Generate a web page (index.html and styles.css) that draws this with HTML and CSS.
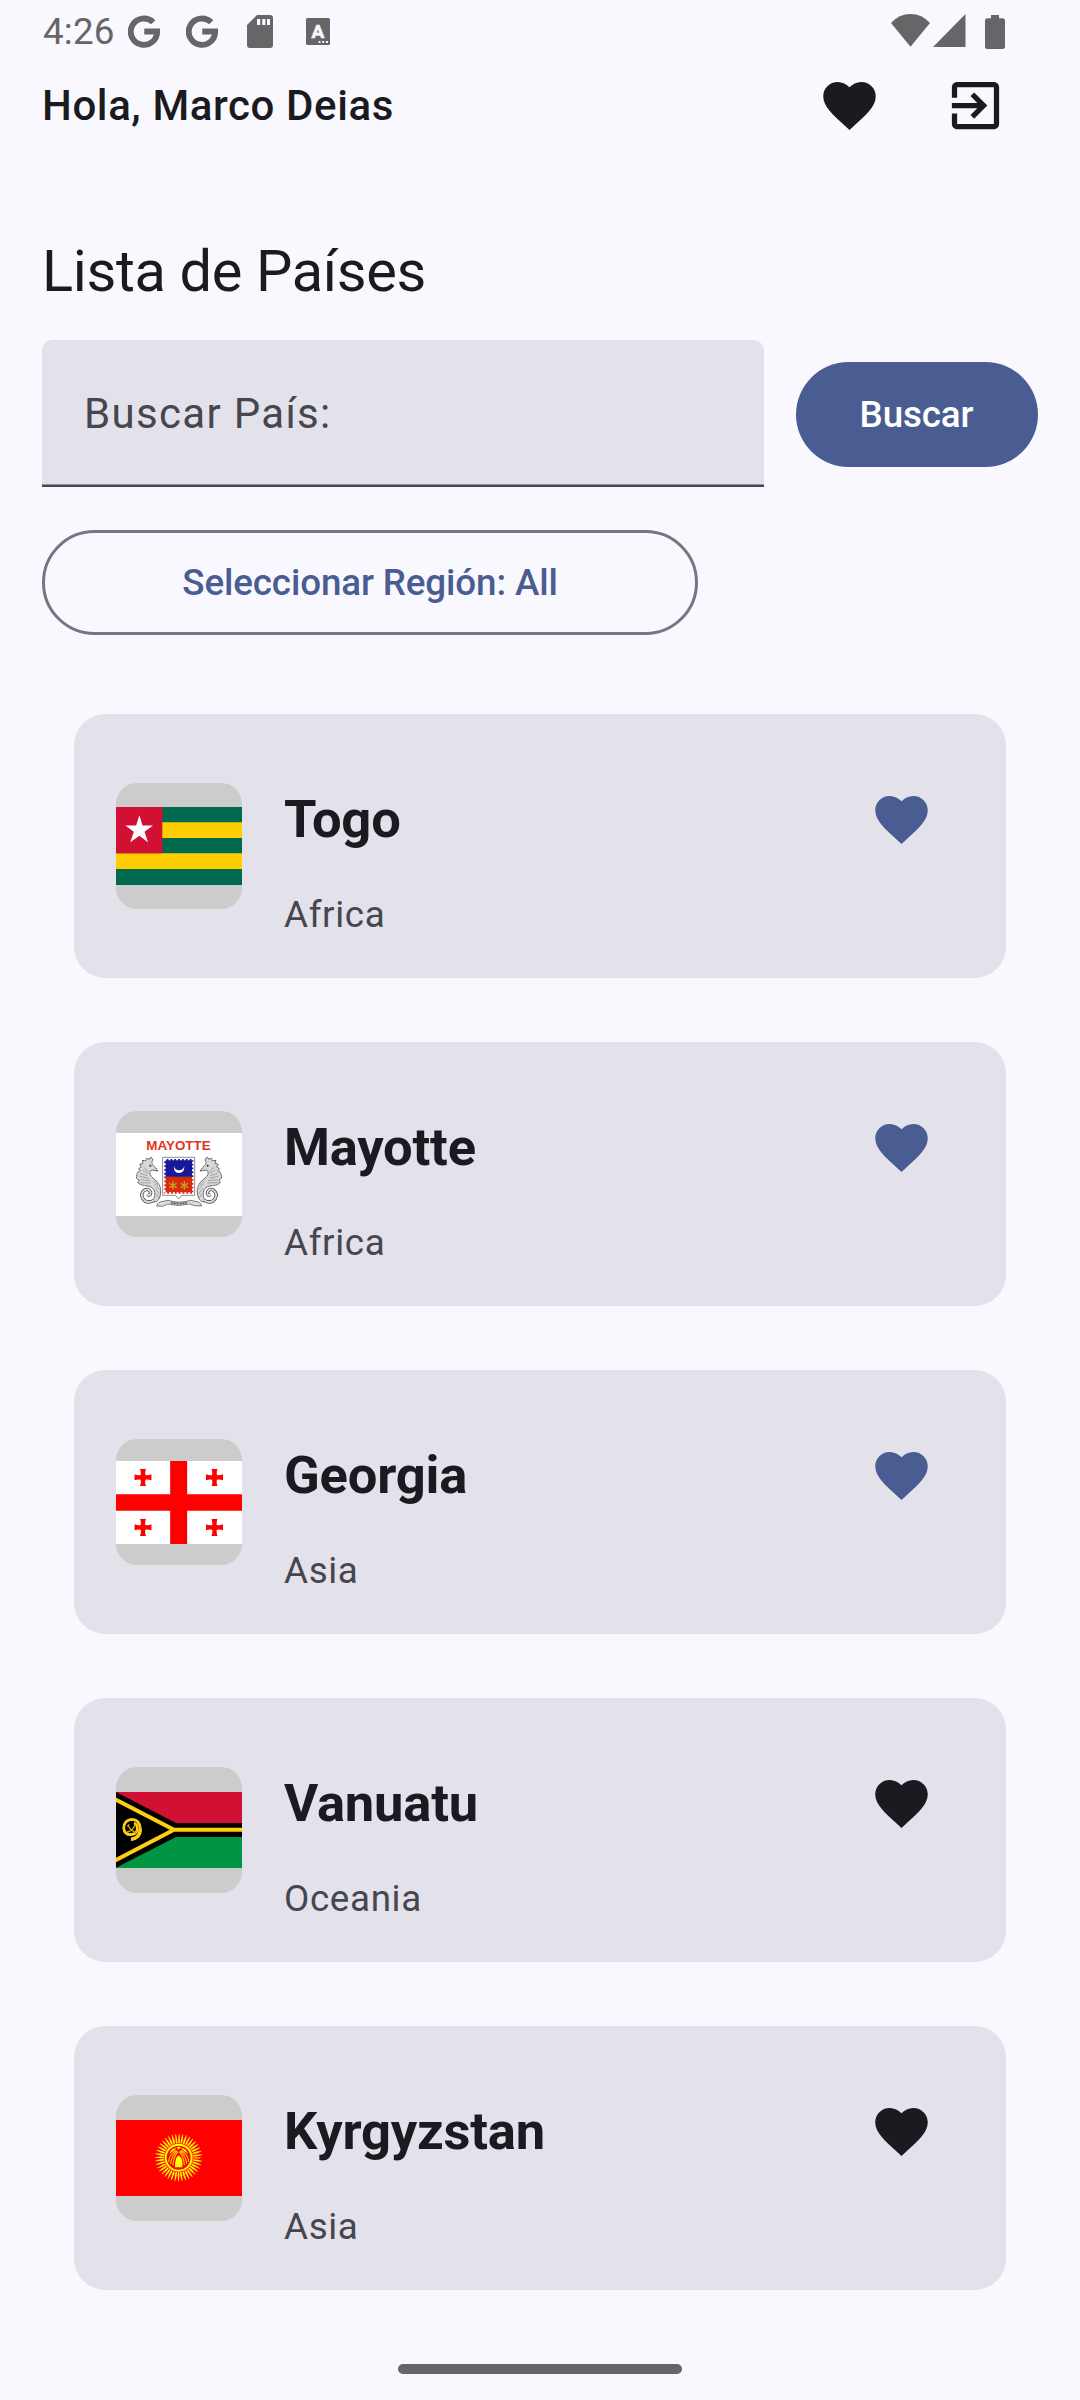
FILE: index.html
```html
<!DOCTYPE html>
<html lang="es">
<head>
<meta charset="utf-8">
<title>Lista de Países</title>
<link rel="stylesheet" href="styles.css">
</head>
<body>
<svg class="defs" aria-hidden="true">
  <symbol id="heart" viewBox="0 0 24 24"><path d="M12 21.35l-1.45-1.32C5.4 15.36 2 12.28 2 8.5 2 5.42 4.42 3 7.5 3c1.74 0 3.41.81 4.5 2.09C13.09 3.81 14.76 3 16.5 3 19.58 3 22 5.42 22 8.5c0 3.78-3.4 6.86-8.55 11.54L12 21.35z"/></symbol>
  <symbol id="google" viewBox="0 0 33 33"><path d="M25.6 7.1A13.4 13.4 0 1 0 29.6 16.5H16.5" fill="none" stroke="currentColor" stroke-width="6"/></symbol>
  <symbol id="cross" viewBox="-26 -26 52 52"><path d="M-9-26H9Q5-14 7-7Q14-5 26-9V9Q14 5 7 7Q5 14 9 26H-9Q-5 14-7 7Q-14 5-26 9V-9Q-14-5-7-7Q-5-14-9-26Z" fill="#f00"/></symbol>
  <symbol id="seahorse" viewBox="0 0 80 146" overflow="visible">
    <path d="M66 44L56 31Q47 25 48 16Q54 6 43 3L40 9L31 6L29 13L19 12L21 21L11 24L16 32L7 37L13 43L5 48Q0 59 2 66L9 71L5 79Q14 87 29 88Q45 89 53 99Q61 118 49 135L60 137Q78 124 73 93Q67 77 51 65Q40 57 42 45Q49 39 58 43Z" fill="#d8d8d8" stroke="#444" stroke-width="3" stroke-dasharray="5 1.5"/>
    <path d="M54 132Q32 145 20 126Q13 112 25 102Q40 94 44 110Q43 120 34 115" fill="none" stroke="#444" stroke-width="10"/>
    <path d="M54 132Q32 145 20 126Q13 112 25 102Q40 94 44 110Q43 120 34 115" fill="none" stroke="#e0e0e0" stroke-width="5.5"/>
    <path d="M12 51L35 58M9 59L38 66M13 70L42 73M12 79L44 80M23 33L38 46M20 41L36 52M51 73L66 86M56 83L70 99M58 96L70 113M59 111L68 124" fill="none" stroke="#888" stroke-width="2"/>
    <circle cx="43" cy="28" r="3" fill="#333"/>
  </symbol>
</svg>

<div class="screen">
  <div class="status">
    <span class="clock">4:26</span>
    <svg class="st-g"><use href="#google"/></svg>
    <svg class="st-g st-g2"><use href="#google"/></svg>
    <svg class="st-sd" viewBox="0 0 26 33"><path fill-rule="evenodd" d="M10 0h13q3 0 3 3v27q0 3-3 3H3q-3 0-3-3V10zM10 4v6h3.200V4zM15.200 4v6h3.200V4zM20 4v6h3V4z"/></svg>
    <svg class="st-a" viewBox="0 0 24 27"><rect width="24" height="27" rx="1.500"/><text x="12" y="20" text-anchor="middle" class="a-letter">A</text><path class="dots" d="M12.500 23h2v2h-2zM16.200 23h2v2h-2zM20 23h2v2h-2z"/></svg>
    <span class="spacer"></span>
    <svg class="st-wifi" viewBox="0 0 39 33"><path d="M0 9Q8 0 19.500 0T39 9L19.500 32.700z"/></svg>
    <svg class="st-signal" viewBox="0 0 33 33"><path d="M32.500 0V33H0z"/></svg>
    <svg class="st-batt" viewBox="0 0 20 34"><path d="M6 0h8v3.300h3.500q2.500 0 2.500 2.500v25.700q0 2.500-2.500 2.500h-15Q0 34 0 31.500V5.800q0-2.500 2.500-2.500H6z"/></svg>
  </div>

  <header class="topbar">
    <span class="greeting">Hola, Marco Deias</span>
    <svg class="icon"><use href="#heart"/></svg>
    <svg class="icon" viewBox="0 0 24 24"><path d="M10.090 15.590L11.500 17l5-5-5-5-1.410 1.410L12.670 11H3v2h9.670l-2.580 2.590zM19 3H5c-1.110 0-2 .9-2 2v4h2V5h14v14H5v-4H3v4c0 1.100.89 2 2 2h14c1.100 0 2-.9 2-2V5c0-1.100-.9-2-2-2z"/></svg>
  </header>

  <main>
    <h1>Lista de Países</h1>
    <div class="search">
      <div class="field">Buscar País:</div>
      <button class="btn filled">Buscar</button>
    </div>
    <button class="btn outlined">Seleccionar Región: All</button>

    <div class="list">
      <article class="card">
        <svg class="flag" viewBox="168 249 378 378">
          <path fill="#006a4e" d="M168 321h378v234H168z"/>
          <path fill="#ffce00" d="M168 367h378v47H168zM168 460h378v47H168z"/>
          <path fill="#d21034" d="M168 321h139v139H168z"/>
          <path fill="#fff" d="M238 346l9.600 30.500H279l-25.500 18.500 10.500 32-26-19.500-27 19.500 10.500-32L196 376.500h32.400z"/>
        </svg>
        <div class="info"><h2>Togo</h2><p>Africa</p></div>
        <svg class="icon fav"><use href="#heart"/></svg>
      </article>

      <article class="card">
        <svg class="flag" viewBox="48 63 378 378">
          <path fill="#fff" d="M48 129h378v249H48z"/>
          <text class="mayotte" x="139" y="181" textLength="193" lengthAdjust="spacingAndGlyphs">MAYOTTE</text>
          <use href="#seahorse" x="108" y="199" width="80" height="146"/>
          <g transform="translate(474 0) scale(-1 1)"><use href="#seahorse" x="108" y="199" width="80" height="146"/></g>
          <path d="M188 202h96v114h-39l-9 11-9-11h-39z" fill="#fff" stroke="#777" stroke-width="2.500"/>
          <path d="M193 207h87v53h-87z" fill="#18189c"/>
          <path d="M193 260h87v51h-87z" fill="#d82c12"/>
          <path d="M194 208h85v102h-85z" fill="none" stroke="#fff" stroke-width="6" stroke-dasharray="6 5.500"/>
          <path d="M193 260h87" stroke="#111" stroke-width="1.500"/>
          <path d="M222 228Q220 249 237 249T253 228Q249 241 237 241T222 228z" fill="#fff"/>
          <path d="M219 274v25M208 280l22 13M208 293l22-13M253 274v25M242 280l22 13M242 293l22-13" stroke="#c5a51b" stroke-width="4"/>
          <path d="M170 348q4-14 20-14l14-3q34 11 68 0l13 3q16 0 20 14l-22-1-14-5q-33 9-66 0l-14 7z" fill="#ddd" stroke="#444" stroke-width="2"/>
          <path d="M213 338q24 5 48 0" fill="none" stroke="#555" stroke-width="6" stroke-dasharray="3 1.500"/>
        </svg>
        <div class="info"><h2>Mayotte</h2><p>Africa</p></div>
        <svg class="icon fav"><use href="#heart"/></svg>
      </article>

      <article class="card">
        <svg class="flag" viewBox="48 57 378 378">
          <path fill="#fff" d="M48 123h378v249H48z"/>
          <path fill="#f00" d="M210.500 123h51v249h-51zM48 222.500h378v50H48z"/>
          <use href="#cross" x="103" y="146" width="52" height="52"/>
          <use href="#cross" x="317.500" y="146" width="52" height="52"/>
          <use href="#cross" x="103" y="296" width="52" height="52"/>
          <use href="#cross" x="317.500" y="296" width="52" height="52"/>
        </svg>
        <div class="info"><h2>Georgia</h2><p>Asia</p></div>
        <svg class="icon fav"><use href="#heart"/></svg>
      </article>

      <article class="card">
        <svg class="flag" viewBox="48 51 378 378">
          <path fill="#d21034" d="M48 126h378v114H48z"/>
          <path fill="#009543" d="M48 240h378v114H48z"/>
          <path fill="#000" d="M48 126L228 219H426v42H228L48 353z"/>
          <path d="M44 147L222 239.500H426M222 239.500L44 332" fill="none" stroke="#fdce12" stroke-width="12"/>
          <path d="M93 268Q121 266 121 235Q119 209 95 208Q72 211 71 234Q73 254 92 254Q111 253 112 236Q111 222 102 219" fill="none" stroke="#fdce12" stroke-width="8"/>
          <path d="M93 268Q121 264 121 237" fill="none" stroke="#fdce12" stroke-width="10"/>
          <path d="M81 246Q99 242 105 224M83 224Q91 242 108 247M82 230l6-7M103 249l7-6" fill="none" stroke="#c9a30e" stroke-width="4"/>
        </svg>
        <div class="info"><h2>Vanuatu</h2><p>Oceania</p></div>
        <svg class="icon"><use href="#heart"/></svg>
      </article>

      <article class="card">
        <svg class="flag" viewBox="48 45 378 378">
          <path fill="#f00" d="M48 120h378v228H48z"/>
          <g fill="none" stroke="#ff0">
            <circle cx="236" cy="233" r="50" stroke-width="13" pathLength="40" stroke-dasharray=".62 .38" stroke-dashoffset=".31"/>
            <circle cx="236" cy="233" r="60" stroke-width="8" pathLength="40" stroke-dasharray=".45 .55" stroke-dashoffset=".225"/>
            <circle cx="236" cy="233" r="67" stroke-width="7" pathLength="40" stroke-dasharray=".25 .75" stroke-dashoffset=".125"/>
            <circle cx="236" cy="233" r="39" stroke-width="6"/>
          </g>
          <g fill="none" stroke="#f5c800" stroke-width="3.500">
            <path d="M206 246Q207 224 229 211M212 252Q214 228 231 213M219 256Q220 232 234 215M266 246Q265 224 243 211M260 252Q258 228 241 213M253 256Q252 232 238 215"/>
          </g>
          <path fill="#ff0" d="M225 262Q224 233 236 226Q250 235 247 262zM208 221Q214 205 229 203L223 211zM264 221Q258 205 243 203L249 211zM229 202Q236 198 243 202L236 209z"/>
        </svg>
        <div class="info"><h2>Kyrgyzstan</h2><p>Asia</p></div>
        <svg class="icon"><use href="#heart"/></svg>
      </article>
    </div>
  </main>
  <div class="home-bar"></div>
</div>
</body>
</html>
```
FILE: styles.css
```css
* { box-sizing: border-box; }
body {
  margin: 0;
  background: #faf8ff;
  color: #1a1b21;
  font-family: Roboto, sans-serif;
}
svg { display: block; flex: none; fill: currentColor; }
.defs { position: absolute; width: 0; height: 0; }
h1, h2, p { margin: 0; }
.screen {
  width: 1080px;
  height: 2400px;
  display: flex;
  flex-direction: column;
  overflow: hidden;
}

.status {
  display: flex;
  align-items: center;
  height: 63px;
  padding: 0 75px 0 42px;
  color: #666668;
}
.clock { padding-left: 1px; font-size: 36.75px; line-height: 63px; letter-spacing: .2px; width: 86px; white-space: nowrap; }
.st-g { width: 32.500px; height: 33px; }
.st-g2 { margin-left: 25.500px; }
.st-sd { width: 26px; height: 33px; margin-left: 28.500px; }
.st-a { width: 24px; height: 27px; margin-left: 33px; }
.a-letter { font: 700 19px Roboto, sans-serif; fill: #faf8ff; stroke: #faf8ff; stroke-width: .6px; }
.dots { fill: #faf8ff; }
.spacer { flex: 1; }
.st-wifi { width: 39px; height: 33px; margin-top: -2px; }
.st-signal { width: 33px; height: 33px; margin: -2px 0 0 3px; }
.st-batt { width: 20px; height: 34px; margin-left: 19px; }

.topbar {
  display: flex;
  align-items: center;
  height: 85px;
  padding: 0 73px 0 42px;
  gap: 63px;
}
.greeting { flex: 1; font-size: 42px; font-weight: 500; line-height: 63px; letter-spacing: .6px; }
.icon { width: 63px; height: 63px; }

main { padding: 87px 42px 0; }
h1 { font-size: 57.750px; font-weight: 400; line-height: 73px; letter-spacing: -.35px; }
.search { display: flex; align-items: center; gap: 32px; margin-top: 32px; }
.field {
  flex: 1;
  height: 147px;
  padding-left: 42px;
  line-height: 147px;
  font-size: 42px;
  letter-spacing: 1.310px;
  color: #45464f;
  background: #e3e1e9;
  border-radius: 10.500px 10.500px 0 0;
  box-shadow: inset 0 -2.625px #45464f;
}
.btn {
  display: block;
  height: 105px;
  padding: 0;
  border: 0;
  border-radius: 53px;
  font: 500 36.750px/105px Roboto, sans-serif;
  letter-spacing: -.12px;
}
.filled { width: 242px; margin-top: 2px; padding-right: 1px; background: #495d92; color: #fff; }
.outlined {
  width: 656px;
  margin-top: 43px;
  border: 3px solid #757680;
  line-height: 99px;
  background: none;
  color: #495d92;
}

.list { display: flex; flex-direction: column; gap: 64px; padding: 79px 32px 0; }
.card {
  display: flex;
  height: 264px;
  padding: 74px 73px 0 42px;
  background: #e3e1e9;
  border-radius: 31.500px;
}
.flag {
  width: 126px;
  height: 126px;
  margin-top: -5px;
  background: #ccc;
  border-radius: 21px;
}
.mayotte { font: 700 38px "Liberation Sans", sans-serif; fill: #e0341c; }
.info { flex: 1; margin-left: 42px; }
h2 { font-size: 52.500px; font-weight: 700; line-height: 63px; letter-spacing: -.2px; }
.info p { margin-top: 38px; font-size: 36.750px; line-height: 52px; letter-spacing: .66px; color: #45464f; }
.fav { color: #495d92; }
.home-bar { width: 284px; height: 10px; margin: 74px auto 0; border-radius: 5px; background: #666668; }
```
